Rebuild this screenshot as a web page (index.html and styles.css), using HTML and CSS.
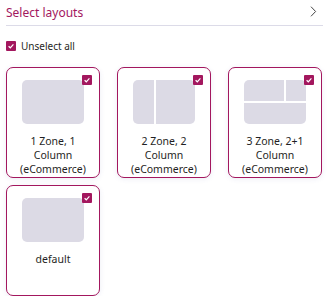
FILE: index.html
```html
<!DOCTYPE html>
<html lang="en">
<head>
    <meta charset="UTF-8">
    <meta name="viewport" content="width=device-width, initial-scale=1.0">
    <title>Select layouts</title>
    <link rel="stylesheet" href="styles.css">
</head>
<body>
    <div class="panel">
        <div class="panel-header">
            <span class="panel-title">Select layouts</span>
            <svg class="chevron" width="7" height="11" viewBox="0 0 7 11"><path d="M1 0.7 L5.6 5.5 L1 10.3" fill="none" stroke="#444" stroke-width="1"/></svg>
        </div>
        <label class="select-all">
            <span class="check"><svg width="10" height="10" viewBox="0 0 10 10"><path d="M2.6 5.2 L4.3 6.8 L7.4 3.4" fill="none" stroke="#fff" stroke-width="1.2"/></svg></span>
            Unselect all
        </label>
        <div class="layout-grid">
            <div class="layout-card">
                <span class="check card-check"><svg width="10" height="10" viewBox="0 0 10 10"><path d="M2.6 5.2 L4.3 6.8 L7.4 3.4" fill="none" stroke="#fff" stroke-width="1.2"/></svg></span>
                <div class="preview"></div>
                <div class="layout-name">1 Zone, 1 Column (eCommerce)</div>
            </div>
            <div class="layout-card">
                <span class="check card-check"><svg width="10" height="10" viewBox="0 0 10 10"><path d="M2.6 5.2 L4.3 6.8 L7.4 3.4" fill="none" stroke="#fff" stroke-width="1.2"/></svg></span>
                <div class="preview preview-2col">
                    <div class="zone"></div>
                    <div class="zone"></div>
                </div>
                <div class="layout-name">2 Zone, 2 Column (eCommerce)</div>
            </div>
            <div class="layout-card">
                <span class="check card-check"><svg width="10" height="10" viewBox="0 0 10 10"><path d="M2.6 5.2 L4.3 6.8 L7.4 3.4" fill="none" stroke="#fff" stroke-width="1.2"/></svg></span>
                <div class="preview preview-3zone">
                    <div class="zone"></div>
                    <div class="zone"></div>
                    <div class="zone zone-wide"></div>
                </div>
                <div class="layout-name">3 Zone, 2+1 Column (eCommerce)</div>
            </div>
            <div class="layout-card">
                <span class="check card-check"><svg width="10" height="10" viewBox="0 0 10 10"><path d="M2.6 5.2 L4.3 6.8 L7.4 3.4" fill="none" stroke="#fff" stroke-width="1.2"/></svg></span>
                <div class="preview"></div>
                <div class="layout-name">default</div>
            </div>
        </div>
    </div>
</body>
</html>
```

FILE: styles.css
```css
body {
    margin: 0;
    background: #fff;
    font-family: "Noto Sans", "Open Sans", sans-serif;
    color: #1f1f24;
}
.panel {
    padding: 0 6px;
}
.panel-header {
    display: flex;
    justify-content: space-between;
    align-items: center;
    height: 25px;
    border-bottom: 1px solid #dcdbe8;
}
.panel-title {
    font-size: 12px;
    color: #a3175e;
    margin-top: -1px;
}
.chevron {
    margin-right: 6px;
    margin-top: -3px;
}
.select-all {
    display: flex;
    align-items: center;
    gap: 5px;
    margin-top: 14px;
    font-size: 10px;
    height: 12px;
}
.check {
    display: inline-flex;
    width: 10px;
    height: 10px;
    background: #a3175e;
    border-radius: 1px;
}
.layout-grid {
    display: grid;
    grid-template-columns: repeat(3, 94px);
    column-gap: 17px;
    row-gap: 7px;
    margin-top: 15px;
}
.layout-card {
    position: relative;
    box-sizing: border-box;
    height: 111px;
    border: 1.3px solid #a3175e;
    border-radius: 7px;
    background: #fff;
    box-shadow: 0 1px 5px rgba(90, 100, 170, 0.12);
    padding-top: 12px;
    display: flex;
    flex-direction: column;
    align-items: center;
}
.card-check {
    position: absolute;
    top: 7px;
    right: 7px;
}
.preview {
    width: 62px;
    height: 44px;
    border-radius: 5px;
    background: #dcdae5;
    overflow: hidden;
}
.preview-2col {
    display: grid;
    grid-template-columns: 21px 1fr;
    gap: 2px;
    background: #fff;
}
.preview-3zone {
    display: grid;
    grid-template-columns: 40px 1fr;
    grid-template-rows: 1fr 1fr;
    gap: 2px;
    background: #fff;
}
.zone {
    background: #dcdae5;
}
.zone-wide {
    grid-column: 1 / 3;
}
.layout-name {
    margin-top: 10px;
    width: 80px;
    text-align: center;
    font-size: 10.5px;
    line-height: 14px;
}
```
